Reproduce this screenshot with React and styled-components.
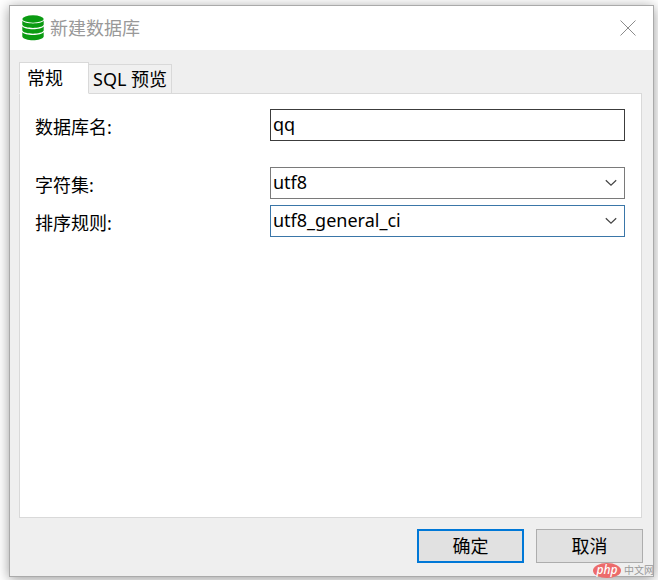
import React, { useState } from "react";
import styled, { createGlobalStyle } from "styled-components";

const GlobalStyle = createGlobalStyle`
  * {
    box-sizing: border-box;
  }
  body {
    margin: 0;
    background: #fff;
  }
  body, button, input, select {
    font-family: "Noto Sans", "Noto Sans CJK SC", sans-serif;
    font-size: 18px;
    line-height: 24px;
    color: #000;
  }
`;

const Desktop = styled.div`
  display: flex;
  min-height: 100vh;
  padding: 5px 4px 3px 9px;
  overflow: hidden;
`;
const Window = styled.section`
  position: relative;
  display: flex;
  flex-direction: column;
  flex: 1;
  border: 1px solid #aaa;
  background: #efefef;
  box-shadow: 0 2px 12px rgba(0, 0, 0, 0.4);
`;
const TitleBar = styled.header`
  display: flex;
  align-items: center;
  gap: 6px;
  height: 44px;
  padding: 0 17px 1px 12px;
  background: #fff;
`;
const Title = styled.h1`
  flex: 1;
  margin: 0;
  font-size: 18px;
  font-weight: 400;
  color: #999;
`;
const CloseButton = styled.button`
  display: flex;
  padding: 0;
  border: 0;
  background: none;
`;
const Body = styled.form`
  display: flex;
  flex-direction: column;
  flex: 1;
  padding: 12px 10px 13px 9px;
`;
const Tabs = styled.div`
  display: flex;
  align-items: flex-end;
`;
const Tab = styled.button`
  position: relative;
  z-index: ${props => (props.$active ? 1 : 0)};
  height: ${props => (props.$active ? "32px" : "30px")};
  min-width: 70px;
  margin-bottom: -1px;
  margin-right: -1px;
  padding: ${props => (props.$active ? "0 7px 1px" : "0 4px")};
  border: 1px solid #d9d9d9;
  border-bottom-color: ${props => (props.$active ? "#fff" : "#d9d9d9")};
  background: ${props => (props.$active ? "#fff" : "#f0f0f0")};
  text-align: left;
  white-space: nowrap;
`;
const Panel = styled.div`
  flex: 1;
  margin-right: 1px;
  padding: 15px 16px 15px 15px;
  border: 1px solid #d9d9d9;
  background: #fff;
`;
const Field = styled.div`
  display: grid;
  grid-template-columns: 235px 1fr;
  margin-bottom: ${props => (props.$spaced ? "26px" : "6px")};
`;
const Label = styled.label`
  padding-top: 6px;
`;
const Input = styled.input`
  width: 100%;
  height: 32px;
  padding: 0 2px 2px;
  border: 1px solid #3c3c3c;
  border-radius: 0;
  outline: none;
  background: #fff;
`;
const SelectBox = styled.div`
  display: grid;
  align-items: center;
  border: 1px solid ${props => (props.$active ? "#3a76a8" : "#7a7a7a")};

  > * {
    grid-area: 1 / 1;
  }
  svg {
    justify-self: end;
    margin-right: 7px;
    pointer-events: none;
  }
`;
const Select = styled.select`
  width: 100%;
  height: 30px;
  padding: 0 24px 2px 2px;
  border: 0;
  outline: none;
  appearance: none;
  background: #fff;
`;
const Footer = styled.footer`
  display: flex;
  justify-content: flex-end;
  gap: 12px;
  padding-top: 11px;
`;
const Button = styled.button`
  width: 107px;
  height: 34px;
  padding: 0;
  border: ${props => (props.$primary ? "2px solid #0078d7" : "1px solid #adadad")};
  background: #e1e1e1;
`;
const Watermark = styled.div`
  position: absolute;
  right: -1px;
  bottom: -2px;
  display: flex;
  align-items: center;
  gap: 3px;
  font-size: 10px;
  line-height: 15px;
  color: #999;
  white-space: nowrap;
`;
const Badge = styled.span`
  width: 28px;
  height: 15px;
  border-radius: 50%;
  background: #ec6b6b;
  color: #fff;
  font-size: 12px;
  font-style: italic;
  font-weight: 500;
  line-height: 13px;
  text-align: center;
`;

const DatabaseIcon = () => (
  <svg width="22" height="26" viewBox="0 0 22 26" fill="#0a9b12" aria-hidden="true">
    <ellipse cx="11" cy="4" rx="10.7" ry="3.7" />
    <path d="M.3 5.6C2 9.4 20 9.4 21.7 5.6v4.2c-1.7 4.2-19.7 4.2-21.4 0z" />
    <path d="M.3 11.3c1.7 3.9 19.7 3.9 21.4 0v4.2c-1.7 4.2-19.7 4.2-21.4 0z" />
    <path d="M.3 17c1.7 3.9 19.7 3.9 21.4 0v4.4c-1.7 5-19.7 5-21.4 0z" />
  </svg>
);

const CloseIcon = () => (
  <svg width="16" height="16" viewBox="0 0 16 16" stroke="#8c8c8c" aria-hidden="true">
    <path d="M.5.5l15 15M15.5.5l-15 15" />
  </svg>
);

const Chevron = () => (
  <svg width="12" height="8" viewBox="0 0 12 8" fill="none" stroke="#444" aria-hidden="true">
    <path d="M.8 1.2L6 6.2l5.2-5" strokeWidth="1.2" />
  </svg>
);

const SelectField = ({ id, label, options, active }) => (
  <Field>
    <Label htmlFor={id}>{label}</Label>
    <SelectBox $active={active}>
      <Select id={id}>
        {options.map(option => (
          <option key={option}>{option}</option>
        ))}
      </Select>
      <Chevron />
    </SelectBox>
  </Field>
);

const tabs = ["常规", "SQL 预览"];

const App = () => {
  const [tab, setTab] = useState(tabs[0]);
  const [name, setName] = useState("qq");

  return (
    <>
      <GlobalStyle />
      <Desktop>
        <Window>
          <TitleBar>
            <DatabaseIcon />
            <Title>新建数据库</Title>
            <CloseButton type="button" aria-label="关闭">
              <CloseIcon />
            </CloseButton>
          </TitleBar>
          <Body onSubmit={event => event.preventDefault()}>
            <Tabs role="tablist">
              {tabs.map(item => (
                <Tab
                  key={item}
                  type="button"
                  role="tab"
                  aria-selected={item === tab}
                  $active={item === tab}
                  onClick={() => setTab(item)}
                >
                  {item}
                </Tab>
              ))}
            </Tabs>
            <Panel role="tabpanel">
              {tab === tabs[0] && (
                <>
                  <Field $spaced>
                    <Label htmlFor="name">数据库名:</Label>
                    <Input
                      id="name"
                      value={name}
                      onChange={event => setName(event.target.value)}
                    />
                  </Field>
                  <SelectField id="charset" label="字符集:" options={["utf8"]} />
                  <SelectField
                    id="collation"
                    label="排序规则:"
                    options={["utf8_general_ci"]}
                    active
                  />
                </>
              )}
            </Panel>
            <Footer>
              <Button type="submit" $primary>
                确定
              </Button>
              <Button type="button">取消</Button>
            </Footer>
          </Body>
          <Watermark>
            <Badge>php</Badge>
            中文网
          </Watermark>
        </Window>
      </Desktop>
    </>
  );
};

export default App;
